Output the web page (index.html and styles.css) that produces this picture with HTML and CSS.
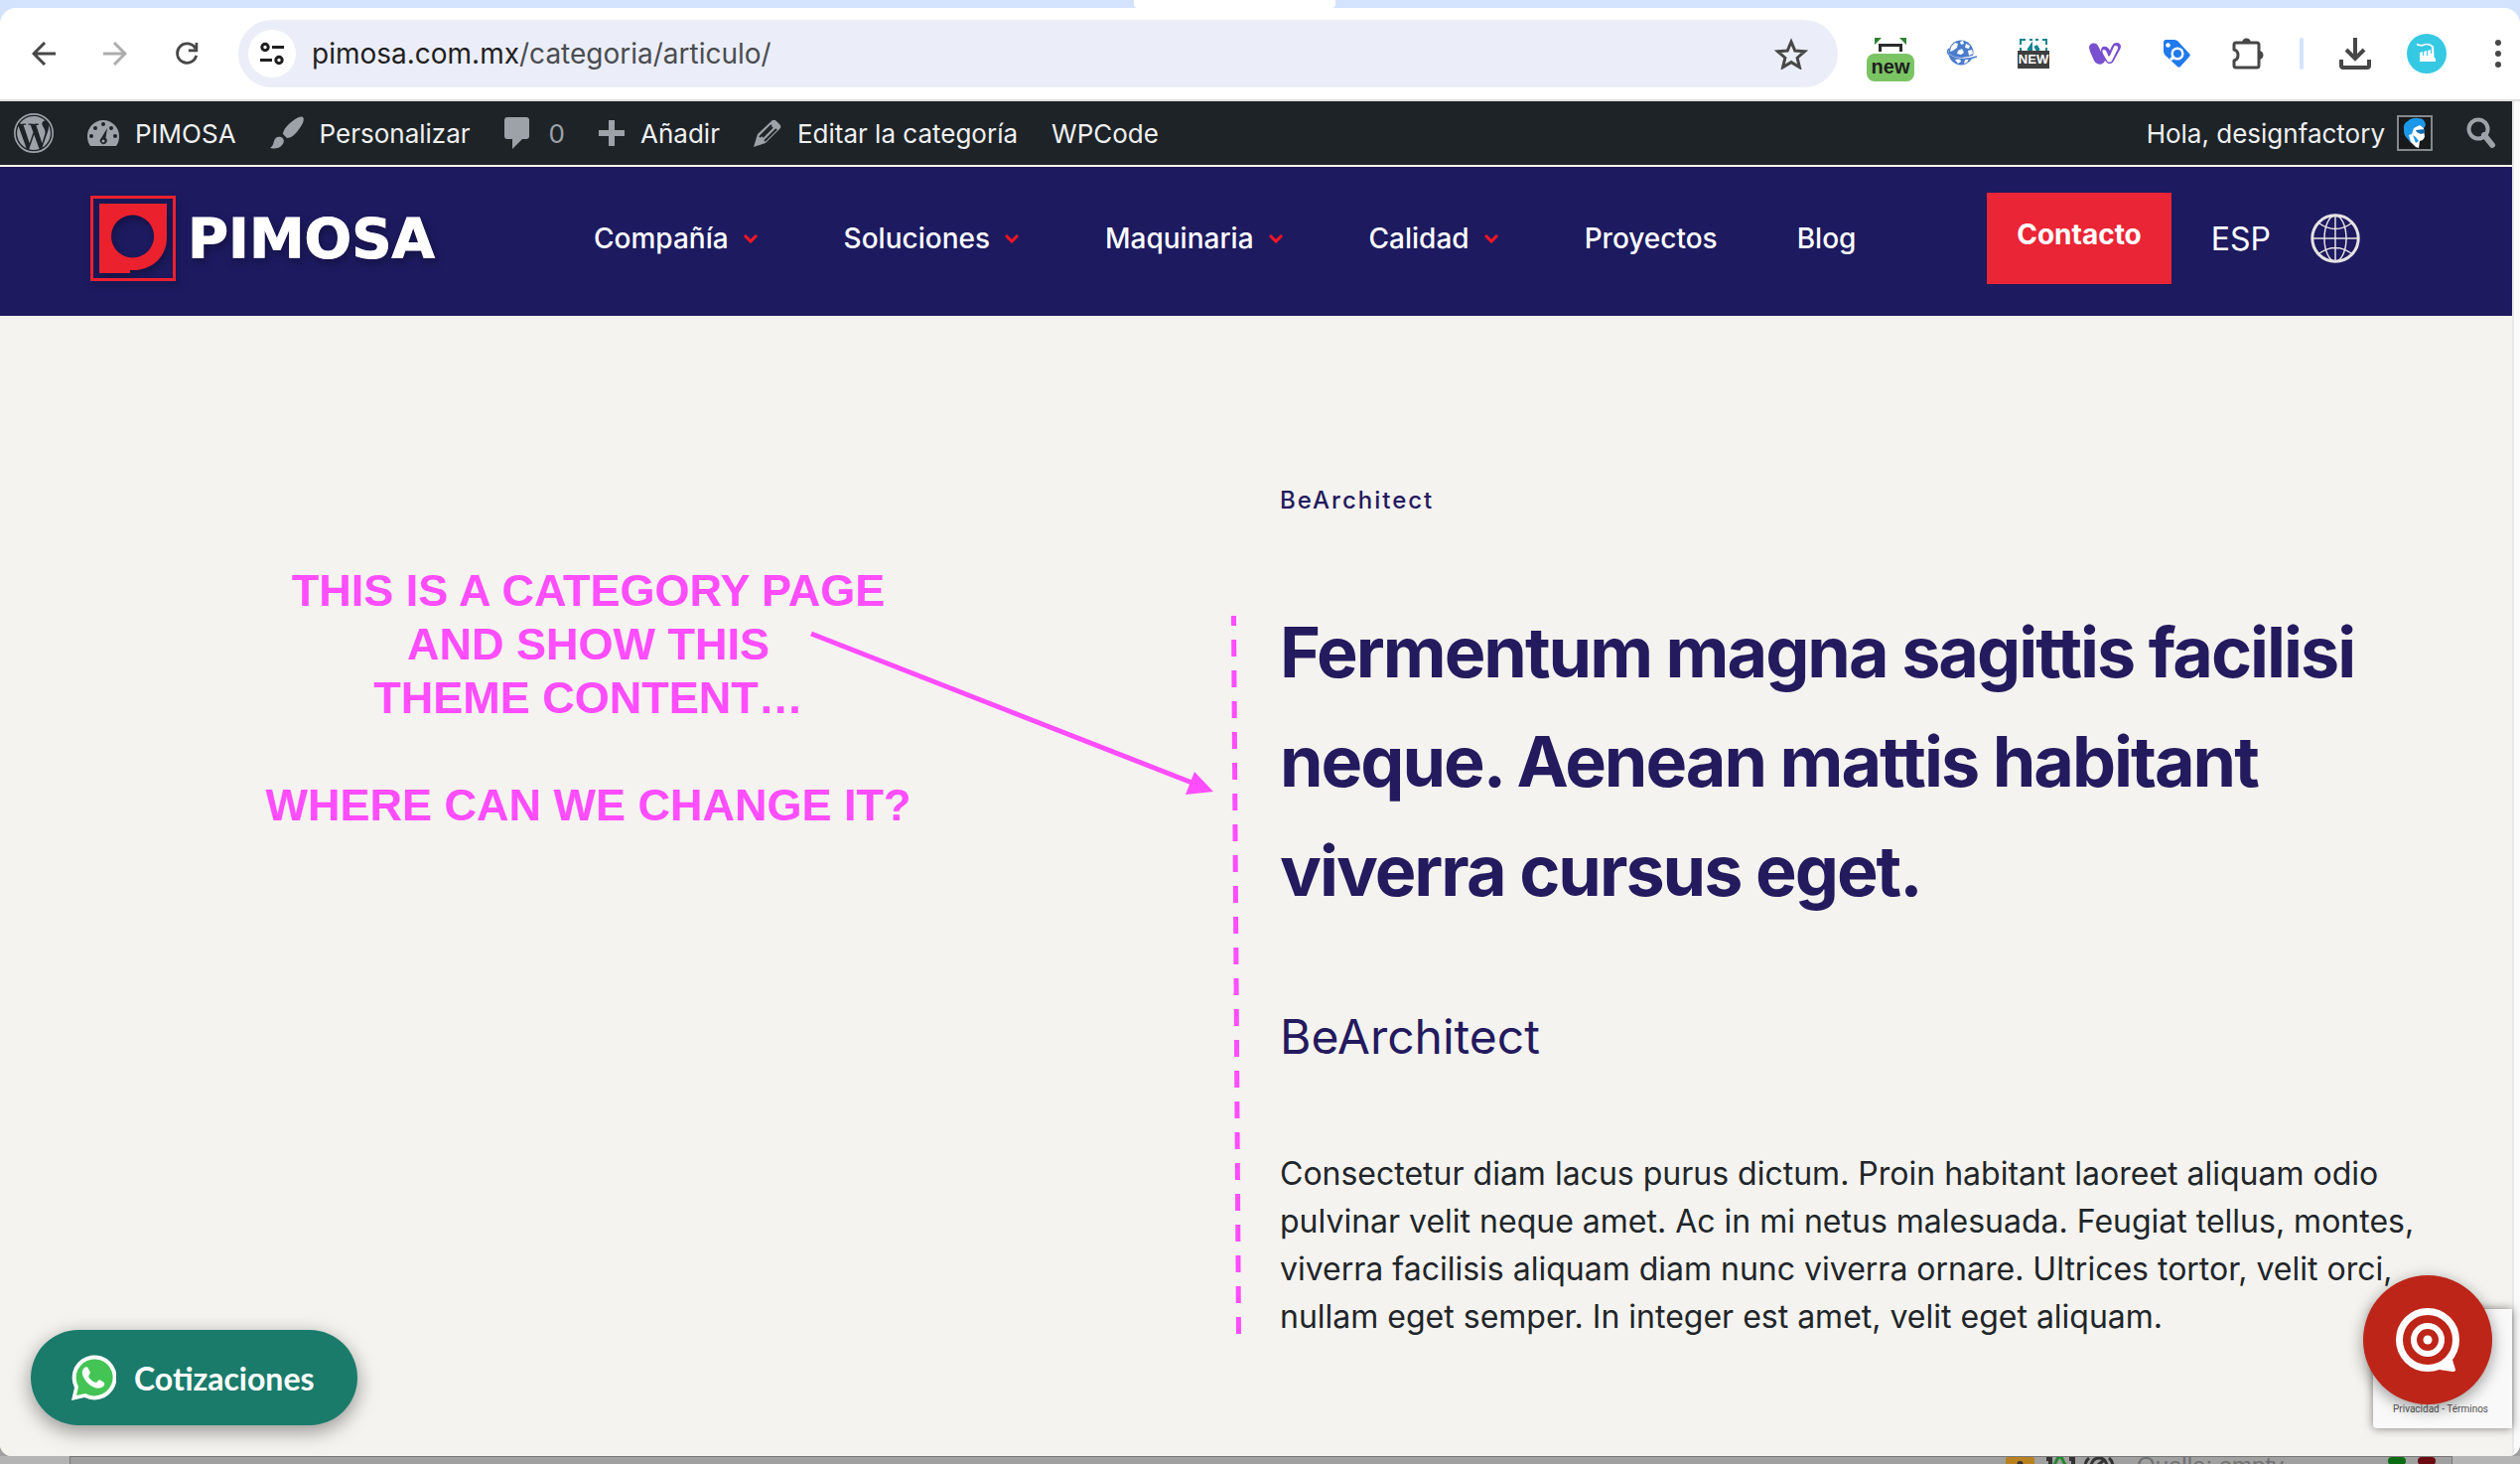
FILE: index.html
```html
<!DOCTYPE html>
<html lang="es">
<head>
<meta charset="utf-8">
<meta name="viewport" content="width=device-width, initial-scale=1">
<title>Artículo – PIMOSA</title>
<link rel="stylesheet" href="styles.css">
</head>
<body>
<div class="tabstrip"><div class="active-tab"></div></div>
<div class="window">
  <div class="toolbar">
    <div class="nav-buttons">
      <button class="icon-btn" aria-label="Atrás"><svg width="24" height="24" viewBox="0 0 24 24" fill="none" stroke="#474747" stroke-width="3"><path d="M24 12H2M13 1L2 12l11 11"/></svg></button>
      <button class="icon-btn" aria-label="Adelante"><svg width="24" height="24" viewBox="0 0 24 24" fill="none" stroke="#adadad" stroke-width="3"><path d="M0 12h22M11 1l11 11-11 11"/></svg></button>
      <button class="icon-btn" aria-label="Recargar"><svg width="24" height="24" viewBox="0 0 26 26" fill="none" stroke="#474747" stroke-width="3"><path d="M22.500 7.500A10.500 10.500 0 1 0 23.500 15M23.700 1v8.500H15"/></svg></button>
    </div>
    <div class="omnibox">
      <button class="site-info" aria-label="Información del sitio"><svg width="24" height="24" viewBox="0 0 24 24" fill="none" stroke="#1f1f1f" stroke-width="3"><circle cx="5" cy="5.500" r="3.200"/><path d="M12 5.500h12M0 18.500h12"/><circle cx="19" cy="18.500" r="3.200"/></svg></button>
      <div class="url" role="textbox" aria-label="Dirección"><span class="host">pimosa.com.mx</span>/categoria/articulo/</div>
      <button class="icon-btn" aria-label="Marcador"><svg width="34" height="32" viewBox="0 0 34 32" fill="none" stroke="#474747" stroke-width="3"><path d="M17 4l3.800 9 9.700.8-7.400 6.400 2.300 9.500L17 24.600l-8.400 5.100 2.300-9.500-7.400-6.400 9.700-.8z"/></svg></button>
    </div>
    <div class="extensions">
      <button class="icon-btn" aria-label="Extensión nueva"><span class="ext-new"><svg width="32" height="14" viewBox="0 0 32 14"><path d="M0 0h7L0 7zM32 0h-7l7 7z" fill="#2f8132"/><path d="M5.500 14V7.500h21V14" fill="none" stroke="#2b2b2b" stroke-width="3"/></svg><span class="ext-badge">new</span></span></button>
      <button class="icon-btn" aria-label="Mundo"><svg width="32" height="28" viewBox="0 0 32 28"><circle cx="15" cy="13" r="12.500" fill="#4b7ccb"/><path d="M5 7l4-4 3 1-1 4-4 3-3 1zM14 2l3-1 1 3-3 1zM20 4l4 2-1 3-4-1zM12 11l4-2 2 4-3 2-4-1zM22 11l4-1 1 4-4 2zM9 20l5-1 1 3-3 2zM19 20l4-1-2 4-3 1z" fill="#fff"/><path d="M2 14c6 5 14 7 27 2" fill="none" stroke="#fff" stroke-width="1.500"/><path d="M3 9c-7 7 12 14 28 8" fill="none" stroke="#4b7ccb" stroke-width="1.500"/></svg></button>
      <button class="icon-btn" aria-label="Captura"><span class="ext-capture"><svg width="32" height="12" viewBox="0 0 32 12" fill="none" stroke="#0f8291" stroke-width="2"><path d="M3 6V1h5M12 1h3M18 1h3M25 1h4v5M3 9v3M29 9v3"/><path d="M11 12l2-3V12M18 7l3 5" stroke-width="4"/></svg><span class="ext-label">NEW</span></span></button>
      <button class="icon-btn" aria-label="Corazones"><svg width="32" height="22" viewBox="0 0 32 22"><path d="M0 5C0 0 7-1 9 3l3 6c0-4 1-5 3-5 3-1 5 2 6 4 2-5 3-8 7-8 4 0 5 4 3 7l-6 11c-2 4-6 4-8 1l-1-1c-2 5-8 5-11 0L1 9z" fill="#7950cf"/><path d="M15 7c-2 0-2 2-1 4l4 7c1 2 4 2 5 0l6-12c1-3-3-4-4-2l-4 9c-1 1-2 1-2-1-1-2-2-5-4-5z" fill="#fff"/></svg></button>
      <button class="icon-btn" aria-label="Etiqueta"><svg width="28" height="28" viewBox="0 0 28 28"><path d="M3 0h9l3 1 12 13c1 1 1 2 0 3l-9 10c-1 1-2 1-3 0L2 15l-1-3V3c0-2 1-3 2-3z" fill="#2079ee"/><circle cx="5.500" cy="5.500" r="2.300" fill="#fff"/><circle cx="15" cy="14" r="5.300" fill="none" stroke="#fff" stroke-width="2.500"/><path d="M8 20l4-3" stroke="#fff" stroke-width="3"/></svg></button>
      <button class="icon-btn" aria-label="Extensiones"><svg width="34" height="34" viewBox="0 0 34 34"><path d="M5 6h21q2 0 2 2v21q0 2-2 2H5q-2 0-2-2v-5q4-1 4-5.500T3 13V8q0-2 2-2z" fill="none" stroke="#474747" stroke-width="3" stroke-linejoin="round"/><path d="M11 6a4.500 4.500 0 0 1 9 0zM28 14a4.500 4.500 0 0 1 0 9z" fill="#474747"/></svg></button>
      <span class="divider"></span>
      <button class="icon-btn" aria-label="Descargas"><svg width="32" height="34" viewBox="0 0 32 34" fill="none" stroke="#474747" stroke-width="4"><path d="M16 1v21M7 13l9 9 9-9M2 23v6q0 2 2 2h24q2 0 2-2v-6"/></svg></button>
      <button class="icon-btn" aria-label="Perfil"><svg width="40" height="40" viewBox="0 0 40 40"><circle cx="20" cy="20" r="20" fill="#36c9e3"/><path d="M13 28v-9l3-1v4h1v-4l3-1v5h1v-5l3-1v4h1v-7l2-1 .5 12 1.500 1v3z" fill="#fff"/><path d="M10 10.500q4 2 7 .7t7 .3q2 1 2 3" fill="none" stroke="#fff" stroke-width="1.500"/></svg></button>
      <button class="icon-btn menu-btn" aria-label="Menú"><svg width="8" height="28" viewBox="0 0 8 28" fill="#474747"><circle cx="4" cy="3" r="3"/><circle cx="4" cy="14" r="3"/><circle cx="4" cy="25" r="3"/></svg></button>
    </div>
  </div>

  <div class="viewport">
    <div class="page">
      <nav class="adminbar" aria-label="Barra de herramientas">
        <a href="#" class="wp" aria-label="WordPress"><svg width="40" height="40" viewBox="0 0 24 24" fill="#9ca2a7"><circle cx="12" cy="12" r="11.500" fill="none" stroke="#9ca2a7"/><path transform="translate(.72 .72) scale(.94)" d="M21.469 6.825c.84 1.537 1.318 3.3 1.318 5.175 0 3.979-2.156 7.456-5.363 9.325l3.295-9.527c.615-1.54.82-2.771.82-3.864 0-.405-.026-.78-.07-1.11m-7.981.105c.647-.03 1.232-.105 1.232-.105.582-.075.514-.93-.067-.899 0 0-1.755.135-2.88.135-1.064 0-2.85-.15-2.85-.15-.585-.03-.661.855-.075.885 0 0 .54.061 1.125.09l1.680 4.605-2.370 7.080L5.354 6.900c.649-.03 1.234-.1 1.234-.1.585-.075.516-.93-.065-.896 0 0-1.746.138-2.874.138-.2 0-.438-.008-.69-.015C4.911 3.150 8.235 1.215 12 1.215c2.809 0 5.365 1.072 7.286 2.833-.046-.003-.091-.009-.141-.009-1.060 0-1.812.923-1.812 1.914 0 .89.513 1.643 1.060 2.531.411.72.89 1.643.89 2.977 0 .915-.354 1.994-.821 3.479l-1.075 3.585-3.900-11.610zM12 22.784c-1.059 0-2.081-.153-3.048-.437l3.237-9.406 3.315 9.087c.024.053.05.101.078.149-1.120.393-2.325.609-3.582.609M1.211 12c0-1.564.336-3.050.935-4.390L7.290 21.709C3.694 19.960 1.212 16.271 1.211 12"/></svg></a>
        <a href="#"><svg width="32" height="26" viewBox="0 0 32 26"><path d="M16 0a16 16 0 0 0-16 16q0 6 3 10h26q3-4 3-10A16 16 0 0 0 16 0z" fill="#9ca2a7"/><g fill="#1d2327"><circle cx="16" cy="4" r="2"/><circle cx="8" cy="8" r="2"/><circle cx="24" cy="8" r="2"/><circle cx="4" cy="16" r="2"/><circle cx="28" cy="16" r="2"/><path d="M20 8l-1.500 10a3.400 3.400 0 1 1-4.500 0z"/></g><circle cx="16" cy="21" r="1.500" fill="#9ca2a7"/></svg>PIMOSA</a>
        <a href="#"><svg width="34" height="34" viewBox="0 0 34 34" fill="#9ca2a7"><path d="M33 1c3 3-3 12-8 17-3 3-6 4-8 4l-4-4c0-2 1-5 4-8 5-5 13-11 16-9zM11 21c3 1 4 5 1 8-3 4-8 4-12 3 3-2 3-4 4-7 1-4 4-5 7-4z"/></svg>Personalizar</a>
        <a href="#" class="muted"><svg width="25" height="32" viewBox="0 0 25 32" fill="#9ca2a7"><path d="M3 0h19q3 0 3 3v16q0 3-3 3h-4l-10 10V22H3q-3 0-3-3V3q0-3 3-3z"/></svg>0</a>
        <a href="#"><svg width="26" height="26" viewBox="0 0 26 26" fill="none" stroke="#9ca2a7" stroke-width="6"><path d="M13 0v26M0 13h26"/></svg>Añadir</a>
        <a href="#"><svg width="28" height="28" viewBox="0 0 28 28"><path d="M19 1q2-1 4 1l3 3q2 2 1 4L12 24 0 28 4 15z" fill="#9ca2a7"/><path d="M6 18L18 6M11 22L23 10M9 18L19 8" stroke="#1d2327" stroke-width="2" fill="none"/></svg>Editar la categoría</a>
        <a href="#">WPCode</a>
        <span class="spacer"></span>
        <a href="#" class="account">Hola, designfactory<svg width="36" height="36" viewBox="0 0 36 36"><rect x="1" y="1" width="34" height="34" fill="#18191b" stroke="#83898d" stroke-width="2"/><path d="M7 15Q6 8 11 6q4-4 11-3 6 0 7 7l-3 5-9 2-3 11-3-4q-4-3-4-9z" fill="#1b97ea"/><path d="M17 13l6-3 4 3 1 9-2 3-3 1-1 7-3-1-5-5-2-7 3-1z" fill="#fff"/><path d="M19 15l9-1v4l-4 1-4-2z" fill="#126cae"/><path d="M16 20l3 8 3-2-3-4z" fill="#1b97ea"/></svg></a>
        <button class="icon-btn" aria-label="Buscar"><svg width="30" height="32" viewBox="0 0 30 32" fill="none" stroke="#9ca2a7"><circle cx="12" cy="12" r="9.500" stroke-width="4"/><path d="M18 18l8 10" stroke-width="6" stroke-linecap="round"/></svg></button>
      </nav>

      <header class="site-header">
        <a href="#" class="logo"><svg width="86" height="86" viewBox="0 0 86 86"><rect x="1.500" y="1.500" width="83" height="83" fill="none" stroke="#ec212e" stroke-width="3"/><path fill-rule="evenodd" d="M9 8h68v34c0 19-14 34-37 33v3H9zM42.500 19.500a21.500 21.500 0 1 0 .1 0z" fill="#ec212e"/></svg><span>PIMOSA</span></a>
        <nav class="menu" aria-label="Principal">
          <a href="#">Compañía<svg class="chev" viewBox="0 0 16 9"><path d="M2 1l6 6 6-6"/></svg></a>
          <a href="#">Soluciones<svg class="chev" viewBox="0 0 16 9"><path d="M2 1l6 6 6-6"/></svg></a>
          <a href="#">Maquinaria<svg class="chev" viewBox="0 0 16 9"><path d="M2 1l6 6 6-6"/></svg></a>
          <a href="#">Calidad<svg class="chev" viewBox="0 0 16 9"><path d="M2 1l6 6 6-6"/></svg></a>
          <a href="#">Proyectos</a>
          <a href="#">Blog</a>
        </nav>
        <div class="actions">
          <a href="#" class="contact">Contacto</a>
          <a href="#" class="lang">ESP<svg width="50" height="50" viewBox="0 0 50 50" fill="none" stroke="#e6e3e3" stroke-width="1.500"><circle cx="25" cy="25" r="23.200" stroke-width="3"/><path d="M25 2v46M2 25h46M9 10q16 11 32 0M9 40q16-11 32 0"/><ellipse cx="25" cy="25" rx="11" ry="23"/></svg></a>
        </div>
      </header>

      <main class="content">
        <aside class="note">
          <p>THIS IS A CATEGORY PAGE<br>AND SHOW THIS<br>THEME CONTENT…</p>
          <p>WHERE CAN WE CHANGE IT?</p>
        </aside>
        <article class="article">
          <p class="eyebrow">BeArchitect</p>
          <h1>Fermentum magna sagittis facilisi neque. Aenean mattis habitant viverra cursus eget.</h1>
          <h2>BeArchitect</h2>
          <p class="body">Consectetur diam lacus purus dictum. Proin habitant laoreet aliquam odio pulvinar velit neque amet. Ac in mi netus malesuada. Feugiat tellus, montes, viverra facilisis aliquam diam nunc viverra ornare. Ultrices tortor, velit orci, nullam eget semper. In integer est amet, velit eget aliquam.</p>
        </article>
        <svg class="arrows" width="440" height="730" viewBox="0 0 440 730" fill="none" stroke="#ff4dff" stroke-width="5"><path d="M5 19l386 151"/><path d="M410 178l-28 3 9-23z" fill="#ff4dff" stroke="none"/><path d="M430.500 1l5 723" stroke-dasharray="17 14" stroke-dashoffset="7"/></svg>
      </main>

      <a href="#" class="whatsapp"><svg width="46" height="46" viewBox="0 0 46 46"><path d="M1 46l3-13A22.500 22.500 0 1 1 14 43z" fill="#fff"/><path d="M6 41l2-9A18.500 18.500 0 1 1 15 39z" fill="#43c455"/><path d="M14 13q3-2 4 1l2 4-2 4q3 5 8 6l3-3 5 3q1 2-1 4-4 3-9 1-9-4-12-13-1-4 2-7z" fill="#fff"/></svg>Cotizaciones</a>
      <div class="recaptcha"><p><a href="#">Privacidad</a> - <a href="#">Términos</a></p></div>
      <button class="chat" aria-label="Chat"><svg width="66" height="66" viewBox="0 0 66 66"><circle cx="33" cy="33" r="28.500" fill="none" stroke="#fff" stroke-width="7"/><path d="M57 50l4 13q0 2-3 2l-20-3z" fill="#fff"/><circle cx="33" cy="33" r="14" fill="none" stroke="#fff" stroke-width="6"/><circle cx="33" cy="33" r="4.500" fill="#fff"/></svg></button>
    </div>
    <div class="scrollbar"></div>
  </div>
</div>
<div class="desktop">
  <div class="desktop-panel">
    <svg width="120" height="8" viewBox="0 0 120 8"><path d="M0 8V2q0-2 2-2h25q2 0 2 2v6z" fill="#b7821f"/><circle cx="14.500" cy="7" r="3" fill="#333"/><path d="M41 2h4v6M64 2h4v6" fill="none" stroke="#333" stroke-width="4"/><path d="M49 8l4-8h3l4 8" fill="none" stroke="#23882b" stroke-width="3"/><path d="M80 8q1-5 4-7M86 8q2-7 8-7t8 7M93 8l5-4M104 1q3 2 4 7" fill="none" stroke="#333" stroke-width="3"/></svg>
    <span class="queue">Quelle: empty</span>
    <span class="led green"></span><span class="led red"></span>
  </div>
</div>
</body>
</html>
```
FILE: styles.css
```css
* { box-sizing: border-box; }

body {
  margin: 0;
  height: 100vh;
  display: flex;
  flex-direction: column;
  overflow: hidden;
  font-family: Inter, "Liberation Sans", sans-serif;
  background: #a0a0a0;
}

a { color: inherit; text-decoration: none; }
p, h1, h2 { margin: 0; }
svg { display: block; flex: none; }

.icon-btn {
  display: flex;
  align-items: center;
  justify-content: center;
  padding: 0;
  border: 0;
  background: none;
}

/* Browser frame */
.tabstrip {
  flex: none;
  height: 24px;
  margin-bottom: -16px;
  background: #d4e3fd;
}

.active-tab {
  width: 8%;
  height: 8px;
  margin-left: 45%;
  background: #fff;
  border-radius: 0 0 4px 4px;
}

.window {
  flex: 1;
  min-height: 0;
  display: flex;
  flex-direction: column;
  overflow: hidden;
  border-radius: 16px 16px 12px 12px;
  background: #fff;
}

.toolbar {
  flex: none;
  display: flex;
  align-items: center;
  height: 94px;
  padding: 12px 0 12px 32px;
  border-bottom: 2px solid #dedede;
}

.nav-buttons {
  display: flex;
  gap: 48px;
  width: 208px;
}

.omnibox {
  flex: 1;
  display: flex;
  align-items: center;
  height: 68px;
  padding: 0 30px 0 10px;
  border-radius: 34px;
  background: #ebeef8;
}

.site-info {
  display: flex;
  align-items: center;
  justify-content: center;
  width: 48px;
  height: 48px;
  padding: 0;
  border: 0;
  border-radius: 50%;
  background: #fff;
}

.url {
  flex: 1;
  padding-left: 16px;
  font-size: 28px;
  color: #4a4c50;
}

.host { color: #1f1f1f; }

.extensions {
  display: flex;
  align-items: center;
  padding: 0 2px 0 17px;
}

.extensions .icon-btn { width: 72px; }
.extensions .menu-btn { width: 40px; margin-left: 16px; }

.ext-new, .ext-capture {
  display: flex;
  flex-direction: column;
  align-items: center;
  font-family: "Liberation Sans", sans-serif;
  font-weight: 700;
}

.ext-new { padding-top: 12px; }

.ext-badge {
  width: 48px;
  height: 28px;
  margin-top: 2px;
  border-radius: 8px;
  background: #7bc464;
  color: #1f1f1f;
  font-size: 20px;
  line-height: 26px;
}

.ext-label {
  width: 32px;
  background: #3f3f3f;
  color: #fff;
  font-size: 13px;
  line-height: 18px;
}

.divider {
  width: 4px;
  height: 32px;
  margin: 0 16px;
  border-radius: 2px;
  background: #d4e3fd;
}

.viewport {
  flex: 1;
  min-height: 0;
  display: flex;
}

.page {
  position: relative;
  flex: 1;
  background: #f4f3ef;
}

.scrollbar {
  width: 8px;
  border-left: 2px solid #e8e8e8;
  background: #fafafa;
}

/* WordPress admin bar */
.adminbar {
  display: flex;
  align-items: center;
  gap: 34px;
  height: 64px;
  padding: 0 16px 0 14px;
  background: #1d2327;
  color: #f0f0f1;
  font-size: 26px;
}

.adminbar a {
  display: flex;
  align-items: center;
  gap: 16px;
}

.adminbar .muted { color: #9ca2a7; gap: 20px; }
.adminbar .account { gap: 12px; }
.spacer { flex: 1; }

/* Site header */
.site-header {
  display: flex;
  align-items: center;
  height: 150px;
  margin-top: 2px;
  padding: 0 153px 6px 91px;
  background: #1d1a60;
  color: #fff;
}

.logo {
  display: flex;
  align-items: center;
  gap: 12px;
  width: 507px;
  font-family: "DejaVu Sans", sans-serif;
  font-size: 56px;
  font-weight: 700;
  line-height: 64px;
  -webkit-text-stroke: 1px #fff;
}

.logo svg, .logo span { filter: drop-shadow(2px 4px 4px rgba(0, 0, 0, .3)); }

.menu {
  flex: 1;
  display: flex;
  gap: 80px;
  font-size: 28px;
  font-weight: 500;
}

.menu a {
  display: flex;
  align-items: center;
  gap: 14px;
}

.chev {
  width: 16px;
  height: 9px;
  margin-right: 6px;
  fill: none;
  stroke: #fb1522;
  stroke-width: 3;
}

.actions {
  display: flex;
  align-items: center;
  gap: 40px;
}

.contact {
  padding: 24px 30px 32px;
  background: #ea2535;
  font-size: 28px;
  font-weight: 700;
  line-height: 36px;
}

.lang {
  display: flex;
  align-items: center;
  gap: 40px;
  font-size: 32px;
}

/* Content */
.content {
  position: relative;
  display: grid;
  grid-template-columns: 1fr 1fr;
}

.note {
  padding: 250px 80px 0 0;
  color: #ff4dff;
  font-family: "Liberation Sans", Arial, sans-serif;
  font-size: 45px;
  font-weight: 700;
  line-height: 54px;
  text-align: center;
}

.note p + p { margin-top: 54px; }

.article {
  padding: 170px 80px 0 24px;
  color: #241a5e;
}

.eyebrow {
  font-size: 24px;
  font-weight: 500;
  line-height: 32px;
  letter-spacing: 2px;
}

h1 {
  margin-top: 82px;
  font-size: 70px;
  font-weight: 700;
  line-height: 110px;
  letter-spacing: -2px;
}

h2 {
  margin-top: 80px;
  font-size: 48px;
  font-weight: 400;
  line-height: 64px;
}

.body {
  margin-top: 82px;
  color: #212529;
  font-size: 32px;
  line-height: 48px;
}

/* Hand-drawn marks over the content */
.arrows {
  position: absolute;
  top: 301px;
  left: 812px;
}

/* Floating widgets */
.whatsapp {
  position: absolute;
  left: 31px;
  bottom: 31px;
  display: flex;
  align-items: center;
  gap: 18px;
  min-width: 329px;
  height: 96px;
  padding: 0 40px;
  border-radius: 48px;
  background: #1a7b6b;
  color: #fff;
  box-shadow: 0 6px 20px rgba(0, 0, 0, .4);
  font-family: Lato, sans-serif;
  font-size: 32px;
  font-weight: 700;
}

.recaptcha {
  position: absolute;
  right: 0;
  bottom: 28px;
  display: flex;
  align-items: flex-end;
  width: 140px;
  height: 120px;
  padding: 0 0 14px 20px;
  border-radius: 4px 0 0 4px;
  background: #f9f9f9;
  box-shadow: 0 0 10px rgba(0, 0, 0, .5);
  color: #555;
  font-family: Roboto, sans-serif;
  font-size: 10px;
}

.chat {
  position: absolute;
  right: 20px;
  bottom: 52px;
  display: flex;
  align-items: center;
  justify-content: center;
  width: 130px;
  height: 130px;
  padding: 0;
  border: 0;
  border-radius: 50%;
  background: #bd2518;
  box-shadow: 0 4px 16px rgba(0, 0, 0, .4);
}

/* Strip of desktop below the window */
.desktop {
  flex: none;
  height: 8px;
  padding: 0 68px 0 70px;
  background: #b4b4b4;
  overflow: hidden;
}

.desktop-panel {
  display: flex;
  align-items: flex-start;
  justify-content: flex-end;
  height: 8px;
  padding-right: 16px;
  border: solid #777;
  border-width: 1px 1px 0;
  background: #a0a0a0;
}

.queue {
  width: 265px;
  padding-left: 12px;
  color: #707070;
  font-family: "Liberation Sans", sans-serif;
  font-size: 24px;
  line-height: 18px;
}

.led {
  width: 18px;
  height: 8px;
  margin-left: 12px;
  border-radius: 4px;
}

.green { background: #0b6b14; margin-left: 0; }
.red { background: #6b0b10; }
```
